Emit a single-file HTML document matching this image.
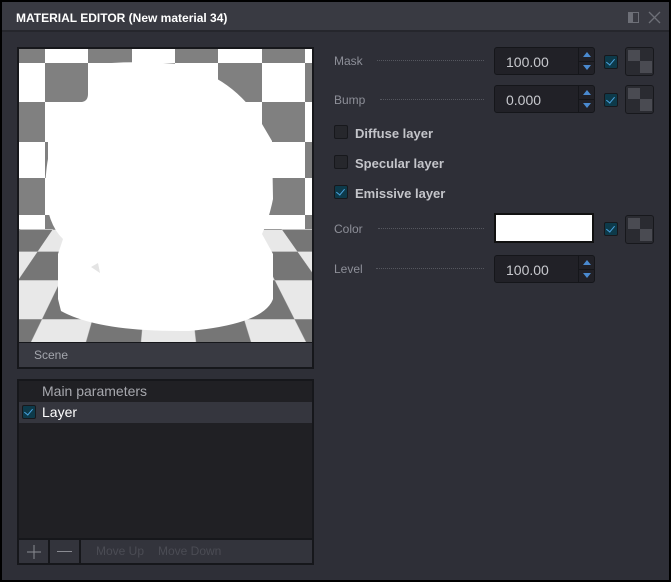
<!DOCTYPE html>
<html><head><style>
*{box-sizing:border-box;margin:0;padding:0}
body{width:671px;height:582px;background:#000;font-family:"Liberation Sans",sans-serif;overflow:hidden;position:relative}
.win{position:absolute;left:2px;top:2px;width:667px;height:578px;background:#2e2f37}
.title{position:absolute;left:0;top:0;width:667px;height:30px;background:#393a42;border-bottom:2px solid #25262c}
.title span{position:absolute;left:14px;top:9px;font-size:12px;font-weight:bold;color:#fff}
.abs{position:absolute}
.lbl{position:absolute;left:334px;font-size:12px;color:#8d8f98}
.dots{position:absolute;border-top:1px dotted #55575f;height:0}
.inp{position:absolute;left:494px;width:101px;height:28px;background:#212127;border:1px solid #15161a;border-radius:3px}
.inp span{position:absolute;left:11px;top:6px;font-size:14px;color:#c8c9ce}
.spin{position:absolute;right:0;top:0;width:16px;height:26px;border-left:1px solid #15161a}
.spin:after{content:"";position:absolute;left:0;right:0;top:13px;border-top:1px solid #15161a}
.up{position:absolute;left:4px;top:4px;border-left:4px solid transparent;border-right:4px solid transparent;border-bottom:5px solid #4a8ad0}
.dn{position:absolute;left:4px;top:17px;border-left:4px solid transparent;border-right:4px solid transparent;border-top:5px solid #4a8ad0}
.cb{position:absolute;width:14px;height:14px;border-radius:2px;background:#26272c;border:1px solid #17181c}
.cb.on{background:#0d3a4a}
.cb.on:after{content:"";position:absolute;left:3px;top:1px;width:4px;height:7px;border-right:1.5px solid #4aa3e0;border-bottom:1.5px solid #4aa3e0;transform:rotate(40deg)}
.tex{position:absolute;left:625px;width:29px;height:29px;border:1px solid #17181c;border-radius:3px;background:#2a2b31}
.tex:before{content:"";position:absolute;left:2px;top:2px;width:12px;height:11px;background:#4a4b52}
.tex:after{content:"";position:absolute;left:14px;top:13px;width:12px;height:12px;background:#4a4b52}
.chk{position:absolute;left:355px;font-size:13px;font-weight:bold;color:#c4c5ca}
</style></head><body>
<div class="win">
<div class="title"><span>MATERIAL EDITOR (New material 34)</span>
<div class="abs" style="left:626px;top:10px;width:11px;height:11px;border:1px solid #6d6f77;"><div class="abs" style="left:0;top:0;width:4px;height:9px;background:#6d6f77"></div></div>
<svg class="abs" style="left:646px;top:9px" width="13" height="13"><path d="M1 1L12 12M12 1L1 12" stroke="#6d6f77" stroke-width="1.3"/></svg>
</div>
</div>
<div class="abs" style="left:17px;top:47px;width:297px;height:322px;background:#16171b"></div>
<div class="abs" style="left:19px;top:49px;width:293px;height:293px;overflow:hidden;background:#fff">
<svg class="abs" style="left:0;top:0" width="293" height="293">
<g fill="#808080">
<rect x="0" y="0" width="26" height="14"/><rect x="69" y="0" width="44" height="14"/><rect x="156" y="0" width="43" height="14"/><rect x="243" y="0" width="43" height="14"/>
<rect x="26" y="14" width="43" height="39"/><rect x="113" y="14" width="43" height="39"/><rect x="199" y="14" width="44" height="39"/><rect x="286" y="14" width="10" height="39"/>
<rect x="0" y="53" width="26" height="40"/><rect x="69" y="53" width="44" height="40"/><rect x="156" y="53" width="43" height="40"/><rect x="243" y="53" width="43" height="40"/>
<rect x="26" y="93" width="43" height="36"/><rect x="113" y="93" width="43" height="36"/><rect x="199" y="93" width="44" height="36"/><rect x="286" y="93" width="10" height="36"/>
<rect x="0" y="129" width="26" height="37"/><rect x="69" y="129" width="44" height="37"/><rect x="156" y="129" width="43" height="37"/><rect x="243" y="129" width="43" height="37"/>
<rect x="26" y="166" width="43" height="15"/><rect x="113" y="166" width="43" height="15"/><rect x="199" y="166" width="44" height="15"/><rect x="286" y="166" width="10" height="15"/>
</g>
</svg>
<div class="abs" style="left:0;top:180px;width:293px;height:113px;overflow:hidden;perspective:260px;perspective-origin:50% -60px;background:#e8e8e8">
<div class="abs" style="left:-853px;bottom:0;width:2000px;height:1400px;transform-origin:50% 100%;transform:rotateX(68deg);background:repeating-conic-gradient(#767676 0 25%,#e8e8e8 0 50%) 40px 0/110px 110px"></div>
</div>
<svg class="abs" style="left:0;top:0" width="293" height="293">
<path d="M29 53 L63 53 Q69 52 69 45 L69 16 Q110 11 160 15 Q215 28 243 75 L253 92 L254 150 Q250 170 243 185 L254 205 L254 250 Q245 275 170 282 Q80 283 42 262 L39 250 L39 205 L44 190 Q28 175 26 140 Q27 120 29 110 Z" fill="#fff"/>
<path d="M72 218 L79 214 L81 224 Z" fill="#e4e4e4"/>
</svg>
</div>
<div class="abs" style="left:19px;top:343px;width:293px;height:24px;background:#393a42"><span class="abs" style="left:15px;top:5px;font-size:12px;color:#a4a6ad">Scene</span></div>
<div class="abs" style="left:17px;top:379px;width:297px;height:186px;background:#16171b"></div>
<div class="abs" style="left:19px;top:381px;width:293px;height:157px;background:#202024"></div>
<span class="abs" style="left:42px;top:383px;font-size:14px;color:#a7a8ae">Main parameters</span>
<div class="abs" style="left:19px;top:402px;width:293px;height:21px;background:#35363e"></div>
<div class="cb on" style="left:22px;top:405px"></div>
<span class="abs" style="left:42px;top:404px;font-size:14px;color:#fff">Layer</span>
<div class="abs" style="left:19px;top:540px;width:29px;height:23px;background:#33343c"><svg class="abs" style="left:7px;top:4px" width="16" height="16"><path d="M8 1V15M1 8H15" stroke="#8a8b92" stroke-width="1"/></svg></div>
<div class="abs" style="left:50px;top:540px;width:29px;height:23px;background:#33343c"><div class="abs" style="left:7px;top:11px;width:15px;height:1px;background:#8a8b92"></div></div>
<div class="abs" style="left:81px;top:540px;width:231px;height:23px;background:#33343c"><span class="abs" style="left:15px;top:4px;font-size:12px;color:#4b4c54">Move Up</span><span class="abs" style="left:77px;top:4px;font-size:12px;color:#4b4c54">Move Down</span></div>
<span class="lbl" style="top:54px">Mask</span><div class="dots" style="left:377px;top:60px;width:107px"></div>
<div class="inp" style="top:47px"><span>100.00</span><div class="spin"><div class="up"></div><div class="dn"></div></div></div>
<div class="cb on" style="left:604px;top:55px"></div><div class="tex" style="top:47px"></div>
<span class="lbl" style="top:93px">Bump</span><div class="dots" style="left:380px;top:99px;width:104px"></div>
<div class="inp" style="top:85px"><span>0.000</span><div class="spin"><div class="up"></div><div class="dn"></div></div></div>
<div class="cb on" style="left:604px;top:93px"></div><div class="tex" style="top:85px"></div>
<div class="cb" style="left:334px;top:125px"></div><span class="chk" style="top:126px">Diffuse layer</span>
<div class="cb" style="left:334px;top:155px"></div><span class="chk" style="top:156px">Specular layer</span>
<div class="cb on" style="left:334px;top:185px"></div><span class="chk" style="top:186px">Emissive layer</span>
<span class="lbl" style="top:222px">Color</span><div class="dots" style="left:378px;top:228px;width:106px"></div>
<div class="abs" style="left:494px;top:213px;width:100px;height:30px;background:#fff;border:2px solid #111"></div>
<div class="cb on" style="left:604px;top:222px"></div><div class="tex" style="top:215px"></div>
<span class="lbl" style="top:262px">Level</span><div class="dots" style="left:376px;top:268px;width:108px"></div>
<div class="inp" style="top:255px"><span>100.00</span><div class="spin"><div class="up"></div><div class="dn"></div></div></div>
</body></html>
